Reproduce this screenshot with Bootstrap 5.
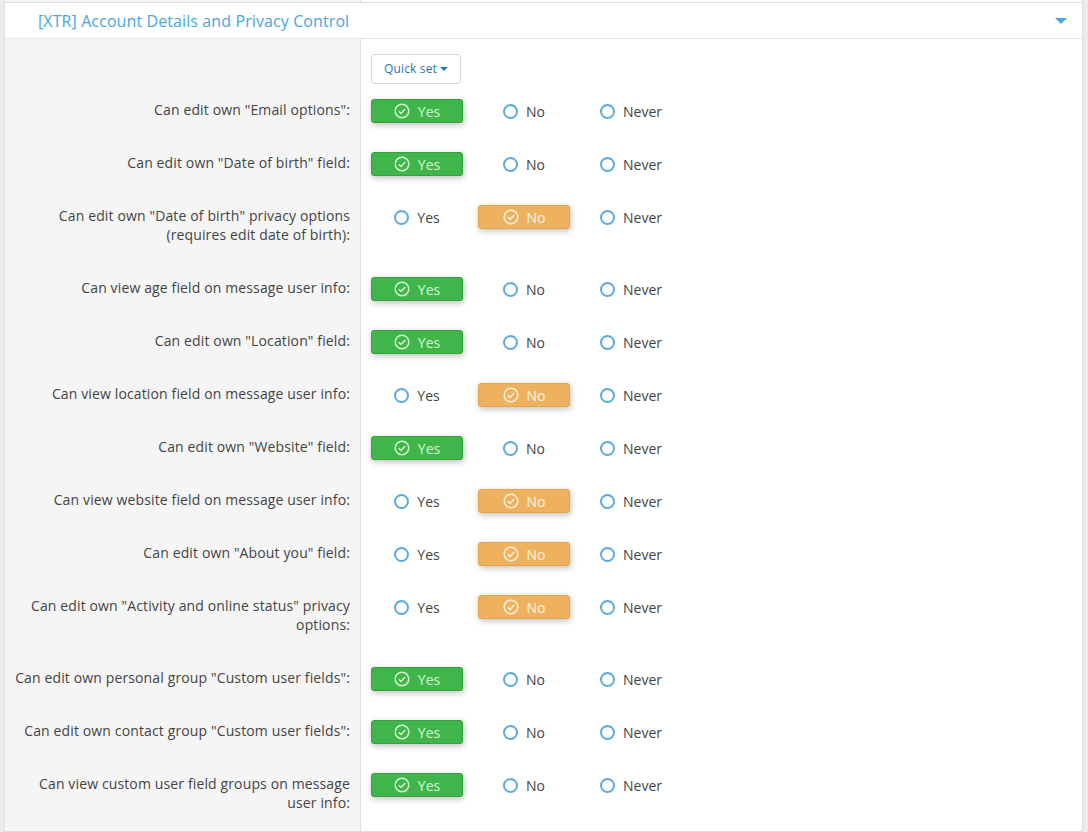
<!DOCTYPE html>
<html lang="en">
<head>
    <meta charset="UTF-8">
    <meta name="viewport" content="width=device-width, initial-scale=1.0">
    <title>Permissions</title>
    <link rel="stylesheet" href="https://cdn.jsdelivr.net/npm/bootstrap@5.3.3/dist/css/bootstrap.min.css">
    <style>
        body { background: #ebebeb; font-family: "Open Sans", "Noto Sans", sans-serif; font-size: 14px; color: #444; overflow: hidden; }
        .perm-shell { width: 1079px; margin-left: 4px; height: 832px; border-left: 1px solid #dfdfdf; border-right: 1px solid #dfdfdf; background: #fff; }
        .perm-sliver { height: 2px; }
        .perm-head { height: 37px; padding: 0 33px; font-size: 16px; letter-spacing: .1px; color: #47a7e0; border-top: 1px solid #dfdfdf; border-bottom: 1px solid #e6e6e6; }
        .perm-caret { width: 0; height: 0; border-left: 6px solid transparent; border-right: 6px solid transparent; border-top: 6px solid #47a7e0; margin-right: -18px; }
        .perm-left { width: 356px; flex: none; background: #f5f5f5; border-right: 1px solid #dfdfdf; }
        .perm-rows { border-bottom: 1px solid #dfdfdf; }
        .perm-label { padding: 15px 10px 19px; text-align: right; line-height: 19px; letter-spacing: .13px; }
        .perm-quick { height: 46px; padding: 15px 0 0 10px; }
        .perm-opts { padding: 14px 0 0 10px; gap: 15px; }
        .perm-btn { width: 90px; height: 30px; padding: 0; font-size: 12px; letter-spacing: .15px; color: #2577b1; background: #fff; border: 1px solid #d6d6d6; border-radius: 3px; }
        .perm-btn::after { vertical-align: 2px; margin-left: 3px; border-top: 4px solid #2577b1; border-left-width: 4px; border-right-width: 4px; border-bottom: 0; }
        .perm-opt { width: 92px; height: 24px; border-radius: 3px; border: 1px solid transparent; gap: 8px; }
        .perm-opt.is-yes { color: #d6f5d3; background: #3fb54a; border-color: #36a040; box-shadow: 1px 2px 6px rgba(0,0,0,.25); }
        .perm-opt.is-no { color: #fdf2e0; background: #eeb25e; border-color: #e5a44c; box-shadow: 1px 2px 6px rgba(0,0,0,.25); }
        .perm-dot { width: 15px; height: 15px; border: 2px solid #5aa9e0; border-radius: 50%; background: #fff; }
    </style>
</head>
<body>
    <div class="perm-shell">
        <div class="perm-sliver d-flex"><div class="perm-left"></div></div>
        <div class="perm-head d-flex align-items-center justify-content-between">
            <span>[XTR] Account Details and Privacy Control</span>
            <span class="perm-caret"></span>
        </div>
        <div id="rows" class="perm-rows">
            <div class="d-flex">
                <div class="perm-left"></div>
                <div class="perm-quick"><button type="button" class="btn dropdown-toggle perm-btn">Quick set</button></div>
            </div>
        </div>
    </div>

    <script>
        var perms = [
            ['Can edit own "Email options":', 0],
            ['Can edit own "Date of birth" field:', 0],
            ['Can edit own "Date of birth" privacy options (requires edit date of birth):', 1],
            ['Can view age field on message user info:', 0],
            ['Can edit own "Location" field:', 0],
            ['Can view location field on message user info:', 1],
            ['Can edit own "Website" field:', 0],
            ['Can view website field on message user info:', 1],
            ['Can edit own "About you" field:', 1],
            ['Can edit own "Activity and online status" privacy options:', 1],
            ['Can edit own personal group "Custom user fields":', 0],
            ['Can edit own contact group "Custom user fields":', 0],
            ['Can view custom user field groups on message user info:', 0]
        ];
        var names = ['Yes', 'No', 'Never'];
        var tick = '<svg width="16" height="16" viewBox="0 0 16 16" fill="none" stroke="currentColor" stroke-width="1.5"><circle cx="8" cy="8" r="6.8"/><path d="M4.8 8.2l2.2 2.2 4.2-4.4"/></svg>';

        var html = '';
        perms.forEach(function(perm) {
            var opts = '';
            names.forEach(function(name, i) {
                if (i === perm[1]) {
                    opts += '<div class="perm-opt d-flex align-items-center justify-content-center ' + (i === 0 ? 'is-yes' : 'is-no') + '">' + tick + '<span>' + name + '</span></div>';
                } else {
                    opts += '<div class="perm-opt d-flex align-items-center justify-content-center"><span class="perm-dot"></span><span>' + name + '</span></div>';
                }
            });
            html += '<div class="d-flex"><div class="perm-left perm-label">' + perm[0] + '</div><div class="perm-opts d-flex">' + opts + '</div></div>';
        });
        document.getElementById('rows').insertAdjacentHTML('beforeend', html);
    </script>
    <script src="https://cdn.jsdelivr.net/npm/bootstrap@5.3.3/dist/js/bootstrap.bundle.min.js"></script>
</body>
</html>
